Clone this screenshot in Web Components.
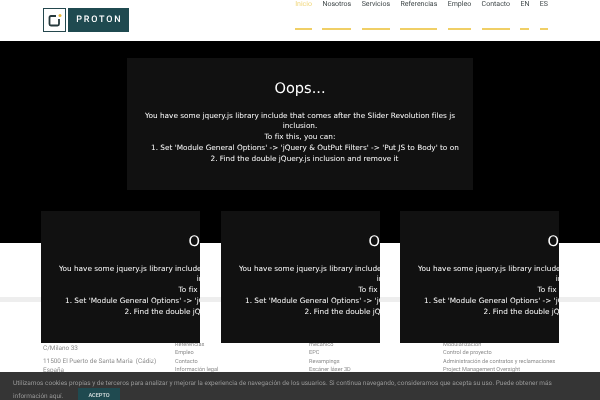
<!DOCTYPE html>
<html lang="es">
<head>
<meta charset="utf-8">
<title>Proton</title>
<style>
  html, body { margin: 0; height: 400px; overflow: hidden; background: #fff; }
  body { position: relative; font-family: Roboto, sans-serif; text-rendering: geometricPrecision; }
</style>
</head>
<body>
<proton-header></proton-header>
<section-hero></section-hero>
<proton-footer></proton-footer>

<error-box style="left:127px;top:58px;width:346px"></error-box>
<error-box style="left:41px;top:211px;width:159px"></error-box>
<error-box style="left:221px;top:211px;width:159px"></error-box>
<error-box style="left:400px;top:211px;width:159px"></error-box>

<cookie-bar></cookie-bar>

<script>
// cabecera con logo y menu
class ProtonHeader extends HTMLElement {
  constructor(){
    super();
    const items = [['Inicio',1],['Nosotros'],['Servicios'],['Referencias'],['Empleo'],['Contacto'],['EN'],['ES']];
    this.attachShadow({mode:'open'}).innerHTML = `
      <style>
        :host{ display:flex; justify-content:space-between; height:41px; background:#fff; padding:0 52px 0 43px; box-sizing:border-box; filter:blur(.3px); }
        .logo{ display:flex; gap:2px; margin-top:8px; height:24px; }
        .mark{ width:23px; height:24px; box-sizing:border-box; border:1px solid #24474d; display:flex; align-items:center; justify-content:center; }
        .name{ width:61px; box-sizing:border-box; padding-left:1.8px; background:#1f4a50; color:#fff; font:500 9px Roboto,sans-serif; letter-spacing:1.8px; display:flex; align-items:center; justify-content:center; }
        nav{ display:flex; gap:10.4px; }
        a{ display:block; height:30px; box-sizing:border-box; border-bottom:2px solid #f0cf66; font:400 7.03px/7px Roboto,sans-serif; color:#3f4749; }
        a.on{ color:#f1d77c; }
      </style>
      <div class="logo">
        <div class="mark">
          <svg width="17" height="17" viewBox="0 0 17 17">
            <path d="M10 4H5Q3.500 4 3.500 5.500V12Q3.500 13.500 5 13.500H11.500Q13 13.500 13 12V7" fill="none" stroke="#26393c" stroke-width="1.800"/>
            <circle cx="14" cy="3.500" r="1.500" fill="#e8b93a"/>
          </svg>
        </div>
        <div class="name">PROTON</div>
      </div>
      <nav>${items.map(i => `<a class="${i[1] ? 'on' : ''}">${i[0]}</a>`).join('')}</nav>`;
  }
}
customElements.define('proton-header', ProtonHeader);

class SectionHero extends HTMLElement {
  constructor(){
    super();
    this.attachShadow({mode:'open'}).innerHTML = `
      <style>:host{ display:block; height:202px; background:#000; }</style>`;
  }
}
customElements.define('section-hero', SectionHero);

// aviso de slider revolution, recortado con el ancho del host
class ErrorBox extends HTMLElement {
  constructor(){
    super();
    this.attachShadow({mode:'open'}).innerHTML = `
      <style>
        :host{ position:absolute; display:block; height:132px; background:#111; overflow:hidden; color:#fff; }
        .in{ width:346px; box-sizing:border-box; padding:0 15px; text-align:center; font-family:"DejaVu Sans",sans-serif; filter:blur(.2px); }
        h2{ margin:0; padding-top:21px; height:52.5px; box-sizing:border-box; font-weight:400; font-size:14.6px; line-height:20px; }
        p{ margin:0; font-size:7.33px; line-height:10.8px; color:#fff; }
        .li{ display:block; padding-left:9px; white-space:nowrap; }
      </style>
      <div class="in">
        <h2>Oops...</h2>
        <p>You have some jquery.js library include that comes after the Slider Revolution files js inclusion.<br>
        To fix this, you can:
        <span class="li">1. Set 'Module General Options' -&gt; 'jQuery &amp; OutPut Filters' -&gt; 'Put JS to Body' to on</span>
        <span class="li">2. Find the double jQuery.js inclusion and remove it</span></p>
      </div>`;
  }
}
customElements.define('error-box', ErrorBox);

class ProtonFooter extends HTMLElement {
  constructor(){
    super();
    const col = (w, lines) => `<div style="width:${w}px">${lines.map(l => `<div>${l}</div>`).join('')}</div>`;
    this.attachShadow({mode:'open'}).innerHTML = `
      <style>
        :host{ display:block; margin-top:54px; border-top:5px solid #eee; background:#fff; filter:blur(.3px); }
        .cols{ display:flex; padding:31px 0 0 43px; font:5.6px/8.2px Roboto,sans-serif; color:#8c8c8c; white-space:nowrap; }
        .addr{ font-size:6.4px; }
        .addr div{ margin-bottom:1px; }
        .addr div:first-child{ margin-top:11px; margin-bottom:5px; }
      </style>
      <div class="cols">
        <div class="addr" style="width:132px"><div>C/Milano 33</div><div>11500 El Puerto de Santa María&nbsp; (Cádiz)</div><div>España</div></div>
        ${col(134, ['Nosotros','Referencias','Empleo','Contacto','Información legal'])}
        ${col(134, ['Ingeniería y Diseño','mecánico','EPC','Revampings','Escáner láser 3D'])}
        ${col(150, ['Consultoría','Modularización','Control de proyecto','Administración de contratos y reclamaciones','Project Management Oversight'])}
      </div>`;
  }
}
customElements.define('proton-footer', ProtonFooter);

class CookieBar extends HTMLElement {
  constructor(){
    super();
    this.attachShadow({mode:'open'}).innerHTML = `
      <style>
        :host{ position:absolute; left:0; right:0; bottom:0; display:block; height:28px; background:#353535; padding:5px 13px 0; box-sizing:border-box; overflow:hidden;
               font:6.47px/13px Roboto,sans-serif; color:#989898; white-space:nowrap; filter:blur(.25px); }
        button{ position:absolute; left:78px; top:16px; width:42px; height:14px; padding:0; border:0; background:#1f4a50; color:#d8e0e0; font:500 5.6px/12px Roboto,sans-serif; }
      </style>
      <div>Utilizamos cookies propias y de terceros para analizar y mejorar la experiencia de navegación de los usuarios. Si continua navegando, consideramos que acepta su uso. Puede obtener más</div>
      <div>información aquí.</div>
      <button>ACEPTO</button>`;
  }
}
customElements.define('cookie-bar', CookieBar);
</script>
</body>
</html>
